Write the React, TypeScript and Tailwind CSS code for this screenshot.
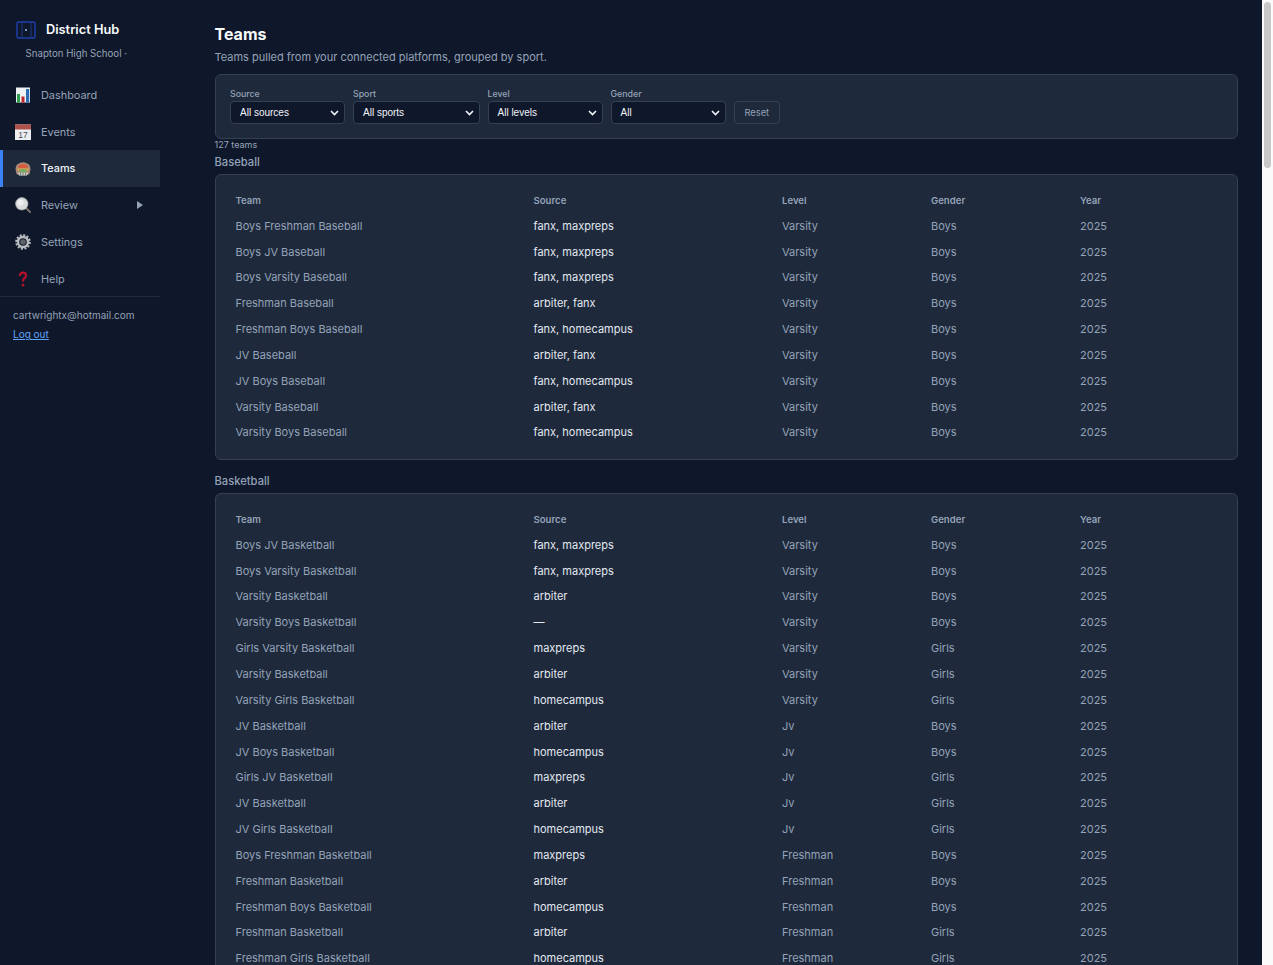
const baseball = [
  ["Boys Freshman Baseball", "fanx, maxpreps", "Varsity", "Boys"],
  ["Boys JV Baseball", "fanx, maxpreps", "Varsity", "Boys"],
  ["Boys Varsity Baseball", "fanx, maxpreps", "Varsity", "Boys"],
  ["Freshman Baseball", "arbiter, fanx", "Varsity", "Boys"],
  ["Freshman Boys Baseball", "fanx, homecampus", "Varsity", "Boys"],
  ["JV Baseball", "arbiter, fanx", "Varsity", "Boys"],
  ["JV Boys Baseball", "fanx, homecampus", "Varsity", "Boys"],
  ["Varsity Baseball", "arbiter, fanx", "Varsity", "Boys"],
  ["Varsity Boys Baseball", "fanx, homecampus", "Varsity", "Boys"],
];

const basketball = [
  ["Boys JV Basketball", "fanx, maxpreps", "Varsity", "Boys"],
  ["Boys Varsity Basketball", "fanx, maxpreps", "Varsity", "Boys"],
  ["Varsity Basketball", "arbiter", "Varsity", "Boys"],
  ["Varsity Boys Basketball", "—", "Varsity", "Boys"],
  ["Girls Varsity Basketball", "maxpreps", "Varsity", "Girls"],
  ["Varsity Basketball", "arbiter", "Varsity", "Girls"],
  ["Varsity Girls Basketball", "homecampus", "Varsity", "Girls"],
  ["JV Basketball", "arbiter", "Jv", "Boys"],
  ["JV Boys Basketball", "homecampus", "Jv", "Boys"],
  ["Girls JV Basketball", "maxpreps", "Jv", "Girls"],
  ["JV Basketball", "arbiter", "Jv", "Girls"],
  ["JV Girls Basketball", "homecampus", "Jv", "Girls"],
  ["Boys Freshman Basketball", "maxpreps", "Freshman", "Boys"],
  ["Freshman Basketball", "arbiter", "Freshman", "Boys"],
  ["Freshman Boys Basketball", "homecampus", "Freshman", "Boys"],
  ["Freshman Basketball", "arbiter", "Freshman", "Girls"],
  ["Freshman Girls Basketball", "homecampus", "Freshman", "Girls"],
];

function ChartIcon() {
  return (
    <svg width="16" height="16" viewBox="0 0 16 16">
      <rect x="1" y="0.5" width="14" height="15" fill="#eef2f4" />
      <rect x="2" y="7" width="3" height="8.5" fill="#2e9e4f" />
      <rect x="6.5" y="9.5" width="3" height="6" fill="#c0272d" />
      <rect x="11" y="2" width="3.2" height="13.5" fill="#2a6db5" />
    </svg>
  );
}

function CalendarIcon() {
  return (
    <svg width="16" height="16" viewBox="0 0 16 16">
      <rect x="0" y="0.5" width="16" height="15.5" fill="#eceeef" />
      <rect x="0" y="0.5" width="16" height="5" fill="#b0524c" />
      <text x="8" y="14" textAnchor="middle" fontSize="8.5" fill="#4a4f55" fontFamily="Liberation Sans">17</text>
    </svg>
  );
}

function StadiumIcon() {
  return (
    <svg width="16" height="16" viewBox="0 0 16 16">
      <path d="M0.5 8 Q1 3 4 2.5 Q8 0 12 2.5 Q15 3 15.5 8 L14.5 13 Q8 16 1.5 13 Z" fill="#a98a78" />
      <path d="M3 5 Q8 1 13 5 L12 7 H4 Z" fill="#d8593c" />
      <path d="M2 7.5 H14 L13 9.5 H3 Z" fill="#e0a040" />
      <ellipse cx="8" cy="9.5" rx="3.6" ry="1.5" fill="#6fae5a" />
      <path d="M3 11.5 H13 L12 14.5 H4 Z" fill="#c9ccc8" />
      <path d="M5.5 11.5v3M8 11.5v3M10.5 11.5v3" stroke="#5b6a5c" strokeWidth="0.8" />
    </svg>
  );
}

function SearchIcon() {
  return (
    <svg width="16" height="16" viewBox="0 0 16 16">
      <path d="M10.5 10.5 L15 15" stroke="#7b7466" strokeWidth="2" strokeLinecap="round" />
      <circle cx="6.8" cy="6.8" r="6.2" fill="#d9dddd" stroke="#a9adad" strokeWidth="0.7" />
      <circle cx="5.5" cy="5.5" r="3" fill="#eef0f0" />
    </svg>
  );
}

function GearIcon() {
  return (
    <svg width="16" height="16" viewBox="0 0 16 16">
      <circle cx="8" cy="8" r="5" fill="none" stroke="#b9bdc1" strokeWidth="2.4" />
      <circle cx="8" cy="8" r="6.8" fill="none" stroke="#b9bdc1" strokeWidth="2" strokeDasharray="2 1.56" />
      <circle cx="8" cy="8" r="2.8" fill="#5d6268" />
    </svg>
  );
}

function QuestionIcon() {
  return (
    <svg width="16" height="16" viewBox="0 0 16 16">
      <path d="M5 5 Q5 1.6 8 1.6 Q11 1.6 11 4.5 Q11 6.5 9 7.5 Q8 8 8 10.5" fill="none" stroke="#b8102c" strokeWidth="2.2" />
      <circle cx="8" cy="14" r="1.5" fill="#b8102c" />
    </svg>
  );
}

function NavItem({ icon, label, active, arrow }: { icon: React.ReactNode; label: string; active?: boolean; arrow?: boolean }) {
  return (
    <div className={`flex h-[36.8px] items-center gap-[10px] border-l-[3px] pl-[12px] pr-[17px] text-[10.9px] ${active ? "border-[#3b82f6] bg-[#1e293b] font-medium text-[#f1f5f9]" : "border-transparent text-[#94a3b8]"}`}>
      <span className="flex w-[16px] justify-center">{icon}</span>
      <span className="flex-1">{label}</span>
      {arrow && <span className="h-0 w-0 border-y-[4px] border-l-[6px] border-y-transparent border-l-[#94a3b8]" />}
    </div>
  );
}

function Field({ label, value, width }: { label: string; value: string; width: string }) {
  return (
    <div className={width}>
      <div className="text-[8.8px] leading-[11px] font-medium text-[#94a3b8]">{label}</div>
      <div className="mt-[2px] flex h-[23px] items-center justify-between rounded-[4px] border border-[#334155] bg-[#0f172a] pl-[9px] pr-[5px] font-['Liberation_Sans',sans-serif] text-[10px] text-[#f1f5f9]">
        <span>{value}</span>
        <svg width="9" height="6" viewBox="0 0 9 6" fill="none"><path d="M1 1l3.5 3.5L8 1" stroke="#f1f5f9" strokeWidth="1.6" /></svg>
      </div>
    </div>
  );
}

function TeamTable({ rows }: { rows: string[][] }) {
  return (
    <div className="rounded-[6px] border border-[#334155] bg-[#1e293b] pb-[13px] pl-[20px] pr-[20px] pt-[14px]">
      <table className="w-full table-fixed border-collapse text-left">
        <thead>
          <tr className="h-[24px] text-[9.6px] font-semibold text-[#94a3b8]">
            <th className="w-[298px] font-semibold">Team</th>
            <th className="w-[248.5px] font-semibold">Source</th>
            <th className="w-[149px] font-semibold">Level</th>
            <th className="w-[149px] font-semibold">Gender</th>
            <th className="font-semibold">Year</th>
          </tr>
        </thead>
        <tbody>
          {rows.map((r, i) => (
            <tr key={i} className="h-[25.85px] text-[11px] text-[#94a3b8]">
              <td>{r[0]}</td>
              <td className="text-[#e2e8f0]">{r[1]}</td>
              <td>{r[2]}</td>
              <td>{r[3]}</td>
              <td>2025</td>
            </tr>
          ))}
        </tbody>
      </table>
    </div>
  );
}

export default function App() {
  return (
    <div className="flex h-screen overflow-hidden bg-[#0f172a] font-['Inter',sans-serif]">
      <aside className="w-[160px] shrink-0">
        <div className="flex items-center gap-[10px] pl-[16px] pt-[20px]">
          <svg width="20" height="20" viewBox="0 0 20 20" fill="none">
            <rect x="1" y="2" width="18" height="16" rx="1.5" stroke="#1e40af" strokeWidth="1.4" />
            <path d="M6 2v16M15 2v16" stroke="#1e3a8a" strokeWidth="1" />
            <circle cx="10" cy="10" r="1" fill="#93c5fd" />
          </svg>
          <span className="text-[12.8px] font-semibold text-[#f8fafc]">District Hub</span>
        </div>
        <div className="mt-[7px] pl-[25.5px] text-[9.7px] text-[#94a3b8]">Snapton High School ·</div>
        <nav className="mt-[15px]">
          <NavItem icon={<ChartIcon />} label="Dashboard" />
          <NavItem icon={<CalendarIcon />} label="Events" />
          <NavItem icon={<StadiumIcon />} label="Teams" active />
          <NavItem icon={<SearchIcon />} label="Review" arrow />
          <NavItem icon={<GearIcon />} label="Settings" />
          <NavItem icon={<QuestionIcon />} label="Help" />
        </nav>
        <div className="-mt-[1px] border-t border-[#1e293b] px-[13px] pt-[11px] text-[10px] text-[#94a3b8]">
          <div>cartwrightx@hotmail.com</div>
          <a className="mt-[4px] block text-[#60a5fa] underline">Log out</a>
        </div>
      </aside>
      <main className="min-w-0 flex-1 overflow-hidden pl-[54.5px] pr-[24px] pt-[22px]">
        <h1 className="text-[16px] leading-[24px] font-bold text-[#f8fafc]">Teams</h1>
        <p className="mt-[4px] text-[11px] leading-[15px] text-[#94a3b8]">Teams pulled from your connected platforms, grouped by sport.</p>
        <div className="mt-[9px] flex items-end gap-[8px] rounded-[6px] border border-[#334155] bg-[#1e293b] pb-[14px] pl-[14.5px] pr-[14px] pt-[13px]">
          <Field label="Source" value="All sources" width="w-[115px]" />
          <Field label="Sport" value="All sports" width="w-[126.5px]" />
          <Field label="Level" value="All levels" width="w-[115px]" />
          <Field label="Gender" value="All" width="w-[115px]" />
          <button className="h-[23px] rounded-[4px] border border-[#334155] px-[10px] text-[9.3px] text-[#94a3b8]">Reset</button>
        </div>
        <div className="text-[9px] leading-[12px] text-[#94a3b8]">127 teams</div>
        <h2 className="mb-[4px] mt-[4px] text-[11.2px] leading-[15px] font-medium text-[#94a3b8]">Baseball</h2>
        <TeamTable rows={baseball} />
        <h2 className="mb-[4.5px] mt-[14px] text-[11.2px] leading-[15px] font-medium text-[#94a3b8]">Basketball</h2>
        <TeamTable rows={basketball} />
      </main>
      <div className="w-[11px] shrink-0 bg-[#fafafa] px-[2px] pt-[2px]">
        <div className="h-[166px] rounded-full bg-[#c8c8c8]" />
      </div>
    </div>
  );
}
